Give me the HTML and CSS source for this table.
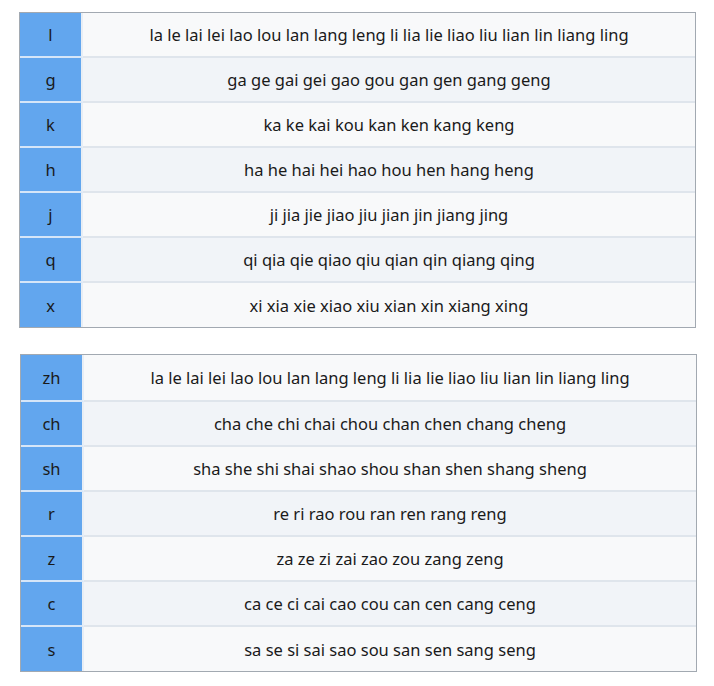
FILE: index.html
```html
<!DOCTYPE html>
<html>
<head>
<meta charset="utf-8">
<link rel="stylesheet" href="styles.css">
</head>
<body>
<div class="page">
  <table class="py py-first">
    <tr><th>l</th><td>la le lai lei lao lou lan lang leng li lia lie liao liu lian lin liang ling</td></tr>
    <tr><th>g</th><td>ga ge gai gei gao gou gan gen gang geng</td></tr>
    <tr><th>k</th><td>ka ke kai kou kan ken kang keng</td></tr>
    <tr><th>h</th><td>ha he hai hei hao hou hen hang heng</td></tr>
    <tr><th>j</th><td>ji jia jie jiao jiu jian jin jiang jing</td></tr>
    <tr><th>q</th><td>qi qia qie qiao qiu qian qin qiang qing</td></tr>
    <tr><th>x</th><td>xi xia xie xiao xiu xian xin xiang xing</td></tr>
  </table>
  <table class="py py-second">
    <tr><th>zh</th><td>la le lai lei lao lou lan lang leng li lia lie liao liu lian lin liang ling</td></tr>
    <tr><th>ch</th><td>cha che chi chai chou chan chen chang cheng</td></tr>
    <tr><th>sh</th><td>sha she shi shai shao shou shan shen shang sheng</td></tr>
    <tr><th>r</th><td>re ri rao rou ran ren rang reng</td></tr>
    <tr><th>z</th><td>za ze zi zai zao zou zang zeng</td></tr>
    <tr><th>c</th><td>ca ce ci cai cao cou can cen cang ceng</td></tr>
    <tr><th>s</th><td>sa se si sai sao sou san sen sang seng</td></tr>
  </table>
</div>
</body>
</html>
```
FILE: styles.css
```css
html, body {
  margin: 0;
  padding: 0;
  background: #ffffff;
}
.page {
  padding: 12px 0 0 19px;
  font-family: "Noto Sans", "Open Sans", sans-serif;
  color: #1a1a1a;
}
.py {
  width: 677px;
  border: 1px solid #a2a9b1;
  border-collapse: separate;
  border-spacing: 0;
  background: #e3e8ee;
  font-size: 16.5px;
}
.py-second {
  margin-top: 26px;
  margin-left: 1px;
}
.py th, .py td {
  height: 43px;
  padding: 0;
  text-align: center;
  vertical-align: middle;
  font-weight: normal;
  border-bottom: 2px solid #dfe5ec;
}
.py tr:last-child th, .py tr:last-child td {
  border-bottom: none;
  height: 44px;
}
.py-second tr:first-child th, .py-second tr:first-child td {
  height: 45px;
}
.py th {
  width: 61px;
  background: #62a6ee;
  border-right: 2px solid #e8eef5;
  border-bottom-color: #d6e6f8;
}
.py td {
  background: #f8f9fa;
}
.py tr:nth-child(even) td {
  background: #f1f4f8;
}
```
